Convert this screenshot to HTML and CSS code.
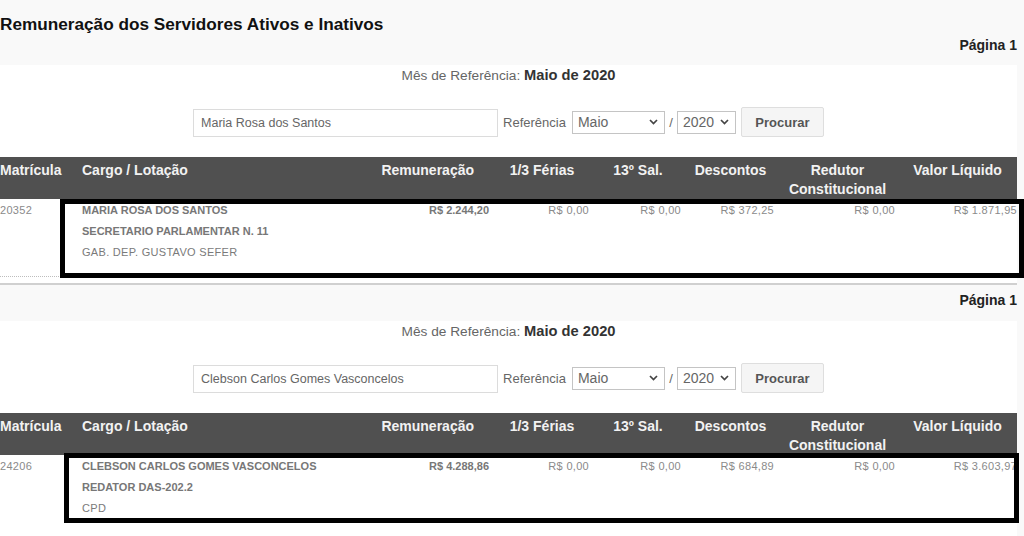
FILE: index.html
```html
<!DOCTYPE html>
<html lang="pt-BR">
<head>
<meta charset="utf-8">
<title>Remuneração dos Servidores Ativos e Inativos</title>
<link rel="stylesheet" href="styles.css">
</head>
<body>
<section class="shot">
  <div class="topbar">
    <h1 class="title">Remuneração dos Servidores Ativos e Inativos</h1>
    <div class="page-num">Página 1</div>
  </div>
  <div class="panel">
    <p class="month">Mês de Referência: <strong>Maio de 2020</strong></p>
    <form class="search">
      <input class="name" type="text" value="Maria Rosa dos Santos">
      <span class="lbl">Referência</span>
      <div class="sel sel-month"><span>Maio</span><svg width="9" height="6" viewBox="0 0 9 6"><path d="M1 1 L4.5 4.5 L8 1" fill="none" stroke="#444" stroke-width="1.7"/></svg></div>
      <span class="slash">/</span>
      <div class="sel sel-year"><span>2020</span><svg width="9" height="6" viewBox="0 0 9 6"><path d="M1 1 L4.5 4.5 L8 1" fill="none" stroke="#444" stroke-width="1.7"/></svg></div>
      <button class="btn" type="button">Procurar</button>
    </form>
    <div class="grid">
      <div class="thead">
        <div class="th th-mat">Matrícula</div>
        <div class="th th-cargo">Cargo / Lotação</div>
        <div class="th th-rem">Remuneração</div>
        <div class="th th-c">1/3 Férias</div>
        <div class="th th-c">13º Sal.</div>
        <div class="th th-c">Descontos</div>
        <div class="th th-c">Redutor<br>Constitucional</div>
        <div class="th th-c">Valor Líquido</div>
      </div>
      <div class="trow">
        <div class="td td-mat">20352</div>
        <div class="td td-cargo">
          <div class="b">MARIA ROSA DOS SANTOS</div>
          <div class="b">SECRETARIO PARLAMENTAR N. 11</div>
          <div>GAB. DEP. GUSTAVO SEFER</div>
        </div>
        <div class="td td-v b">R$ 2.244,20</div>
        <div class="td td-v">R$ 0,00</div>
        <div class="td td-v">R$ 0,00</div>
        <div class="td td-v">R$ 372,25</div>
        <div class="td td-v">R$ 0,00</div>
        <div class="td td-v td-last">R$ 1.871,95</div>
        <div class="mark mark-1"></div>
      </div>
    </div>
  </div>
</section>
<div class="sep"></div>
<section class="shot">
  <div class="topbar topbar-2">
    <div class="page-num">Página 1</div>
  </div>
  <div class="panel">
    <p class="month">Mês de Referência: <strong>Maio de 2020</strong></p>
    <form class="search">
      <input class="name" type="text" value="Clebson Carlos Gomes Vasconcelos">
      <span class="lbl">Referência</span>
      <div class="sel sel-month"><span>Maio</span><svg width="9" height="6" viewBox="0 0 9 6"><path d="M1 1 L4.5 4.5 L8 1" fill="none" stroke="#444" stroke-width="1.7"/></svg></div>
      <span class="slash">/</span>
      <div class="sel sel-year"><span>2020</span><svg width="9" height="6" viewBox="0 0 9 6"><path d="M1 1 L4.5 4.5 L8 1" fill="none" stroke="#444" stroke-width="1.7"/></svg></div>
      <button class="btn" type="button">Procurar</button>
    </form>
    <div class="grid">
      <div class="thead">
        <div class="th th-mat">Matrícula</div>
        <div class="th th-cargo">Cargo / Lotação</div>
        <div class="th th-rem">Remuneração</div>
        <div class="th th-c">1/3 Férias</div>
        <div class="th th-c">13º Sal.</div>
        <div class="th th-c">Descontos</div>
        <div class="th th-c">Redutor<br>Constitucional</div>
        <div class="th th-c">Valor Líquido</div>
      </div>
      <div class="trow trow-plain">
        <div class="td td-mat">24206</div>
        <div class="td td-cargo">
          <div class="b">CLEBSON CARLOS GOMES VASCONCELOS</div>
          <div class="b">REDATOR DAS-202.2</div>
          <div>CPD</div>
        </div>
        <div class="td td-v b">R$ 4.288,86</div>
        <div class="td td-v">R$ 0,00</div>
        <div class="td td-v">R$ 0,00</div>
        <div class="td td-v">R$ 684,89</div>
        <div class="td td-v">R$ 0,00</div>
        <div class="td td-v td-last">R$ 3.603,97</div>
        <div class="mark mark-2"></div>
      </div>
    </div>
  </div>
</section>
</body>
</html>
```

FILE: styles.css
```css
* { box-sizing: border-box; }

html, body {
  margin: 0;
  padding: 0;
}

body {
  width: 1024px;
  height: 536px;
  overflow: hidden;
  background: #f9f9f9;
  font-family: "Liberation Sans", Arial, sans-serif;
  color: #333;
}

.topbar {
  display: flex;
  flex-direction: column;
  height: 65px;
  width: 1017px;
}

.topbar-2 {
  height: 36px;
  padding-top: 7px;
}

.title {
  margin: 15px 0 0;
  font-size: 17.2px;
  line-height: 18px;
  font-weight: bold;
  color: #111;
}

.page-num {
  margin-top: 4px;
  text-align: right;
  font-size: 14px;
  line-height: 16px;
  font-weight: bold;
  color: #222;
}

.topbar-2 .page-num { margin-top: 0; }

.sep {
  width: 1017px;
  height: 2px;
  background: #d0d0d0;
}

.panel {
  width: 1017px;
  background: #fff;
  padding-bottom: 6px;
}

.month {
  margin: 0;
  height: 20px;
  line-height: 20px;
  text-align: center;
  font-size: 13.7px;
  color: #666;
}

.month strong {
  font-size: 14.7px;
  color: #333;
}

.search {
  display: flex;
  justify-content: center;
  align-items: center;
  margin: 22px 0 0;
  height: 30px;
}

.name {
  width: 305px;
  height: 28px;
  margin: 2px 0 0;
  padding: 0 7px;
  border: 1px solid #dcdcdc;
  font-family: inherit;
  font-size: 12.5px;
  color: #666;
  background: #fff;
  outline: none;
}

.lbl {
  margin-left: 5px;
  font-size: 13px;
  color: #666;
}

.sel {
  display: flex;
  align-items: center;
  justify-content: space-between;
  height: 23px;
  margin-left: 6px;
  padding: 0 6px 0 5px;
  border: 1px solid #c4c4c4;
  background: #fff;
  font-size: 14px;
  color: #666;
}

.sel-month { width: 93px; }
.sel-year { width: 59px; margin-left: 0; }

.slash {
  width: 12px;
  text-align: center;
  font-size: 13px;
  color: #666;
}

.btn {
  width: 83px;
  height: 30px;
  margin-left: 5px;
  border: 1px solid #dedede;
  border-radius: 2px;
  background: #f5f5f5;
  font-family: inherit;
  font-size: 13px;
  font-weight: bold;
  color: #555;
}

.grid {
  margin-top: 20px;
}

.thead,
.trow {
  display: grid;
  grid-template-columns: 78px 298px 116px 100px 92px 93px 121px 119px;
}

.thead {
  height: 42px;
  background: #505050;
}

.th {
  padding-top: 4px;
  font-size: 14px;
  line-height: 19px;
  font-weight: bold;
  color: #f2f2f2;
  white-space: nowrap;
}

.th-mat { text-align: left; }
.th-cargo { padding-left: 4px; }
.th-rem { text-align: right; padding-right: 18px; }
.th-c { text-align: center; }

.trow {
  position: relative;
  padding: 1px 0 13px;
  border-bottom: 1px dotted #bdbdbd;
}

.trow-plain { border-bottom: none; }

.td {
  font-size: 11px;
  line-height: 21px;
  color: #8a8a8a;
  letter-spacing: 0.3px;
  white-space: nowrap;
}

.td-cargo {
  padding-left: 4px;
  color: #7a7a7a;
}

.b {
  font-weight: bold;
  letter-spacing: 0;
  color: #777;
}

.td-v {
  text-align: right;
  padding-right: 3px;
}

.td-last { padding-right: 0; }

.mark {
  position: absolute;
  border: 5px solid #000;
}

.mark-1 {
  top: 0;
  left: 60px;
  width: 964px;
  height: 79px;
}

.mark-2 {
  top: -2px;
  left: 64px;
  width: 955px;
  height: 70px;
}
```
